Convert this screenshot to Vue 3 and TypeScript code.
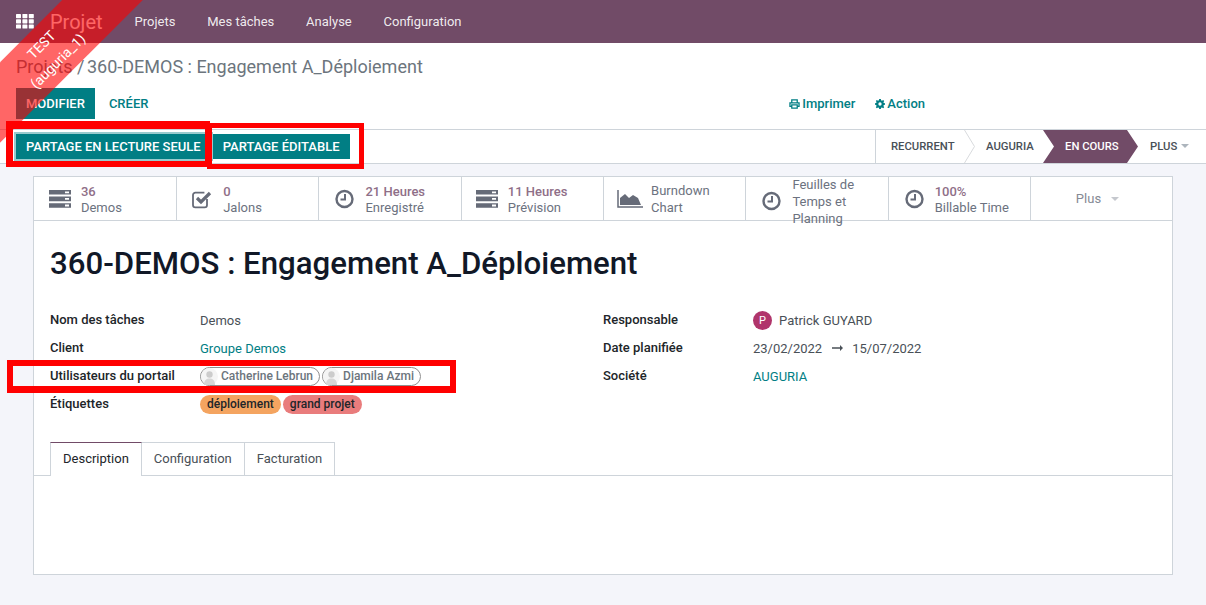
<script setup lang="ts">
const menus = ['Projets', 'Mes tâches', 'Analyse', 'Configuration']

interface Stat {
  icon: 'server' | 'check' | 'clock' | 'chart'
  value?: string
  label: string
}

const stats: Stat[] = [
  { icon: 'server', value: '36', label: 'Demos' },
  { icon: 'check', value: '0', label: 'Jalons' },
  { icon: 'clock', value: '21 Heures', label: 'Enregistré' },
  { icon: 'server', value: '11 Heures', label: 'Prévision' },
  { icon: 'chart', label: 'Burndown Chart' },
  { icon: 'clock', label: 'Feuilles de Temps et Planning' },
  { icon: 'clock', value: '100%', label: 'Billable Time' },
]

const portalUsers = ['Catherine Lebrun', 'Djamila Azmi']
const tabs = ['Description', 'Configuration', 'Facturation']
</script>

<template>
  <div class="page">
    <header class="navbar">
      <svg class="apps" width="18" height="15" viewBox="0 0 18 15" fill="#fff">
        <rect v-for="p in 9" :key="p" :x="((p - 1) % 3) * 6.4" :y="Math.floor((p - 1) / 3) * 5.2" width="5" height="4.2" rx="0.6" />
      </svg>
      <span class="brand">Projet</span>
      <nav class="menu">
        <a v-for="m in menus" :key="m">{{ m }}</a>
      </nav>
    </header>

    <section class="control">
      <div class="breadcrumb"><span class="crumb-parent">Projets / </span>360-DEMOS : Engagement A_Déploiement</div>
      <div class="actions">
        <div class="left-actions">
          <button class="btn primary" type="button">MODIFIER</button>
          <button class="btn link" type="button">CRÉER</button>
        </div>
        <div class="right-actions">
          <a>
            <svg width="11" height="10" viewBox="0 0 12 11" fill="none" stroke="#017e84" stroke-width="1.4">
              <path d="M3 4V1h6v3M3 8H1V4.2h10V8H9M3 6.5h6V10H3z" />
            </svg>
            Imprimer
          </a>
          <a>
            <svg width="10" height="10" viewBox="0 0 12 12">
              <path fill="#017e84" fill-rule="evenodd" d="M5 0h2l.3 1.6 1.1.5L9.8 1.2l1.2 1.2-.9 1.4.5 1.1L12 5v2l-1.4.3-.5 1.1.9 1.4-1.2 1.2-1.4-.9-1.1.5L7 12H5l-.3-1.400-1.100-.5-1.400.9L1 9.800l.9-1.400-.5-1.100L0 7V5l1.400-.3.5-1.100L1 2.400l1.200-1.200 1.400.9 1.100-.5zM6 4a2 2 0 1 0 0 4 2 2 0 0 0 0-4z" />
            </svg>
            Action
          </a>
        </div>
      </div>
      <div class="status-row">
        <div class="share-buttons">
          <button class="btn primary share focused" type="button">PARTAGE EN LECTURE SEULE</button>
          <button class="btn primary share" type="button">PARTAGE ÉDITABLE</button>
        </div>
        <div class="statusbar">
          <span class="step first">RECURRENT
            <svg class="chevron" width="12" height="33" viewBox="0 0 12 33" fill="none" stroke="#d8dadd"><path d="M0.5 0l10 16.5L0.5 33" /></svg>
          </span>
          <span class="step second">AUGURIA</span>
          <span class="step current">EN COURS</span>
          <span class="step more">PLUS <i class="caret"></i></span>
        </div>
      </div>
    </section>

    <main class="content">
      <div class="sheet">
        <div class="stats">
          <div v-for="s in stats" :key="s.label" class="stat">
            <svg v-if="s.icon === 'server'" class="stat-icon" width="24" height="20" viewBox="0 0 24 20" fill="#666b78">
              <path fill-rule="evenodd" d="M1 1h22v4.6H1zM17 2.400v1.800h4V2.400zM1 7.600h22v4.600H1zM17 9v1.800h4V9zM1 14.200h22v4.600H1zM17 15.600v1.800h4v-1.800z" />
            </svg>
            <svg v-else-if="s.icon === 'check'" class="stat-icon" width="24" height="20" viewBox="0 0 24 20">
              <path fill="none" stroke="#666b78" stroke-width="1.800" d="M17 10v6a2.400 2.400 0 0 1-2.400 2.400H5.400A2.400 2.400 0 0 1 3 16V6a2.400 2.400 0 0 1 2.400-2.400h9" />
              <path fill="none" stroke="#666b78" stroke-width="3.200" d="M7 9l4 4 9-9" />
            </svg>
            <svg v-else-if="s.icon === 'clock'" class="stat-icon" width="24" height="20" viewBox="0 0 24 20" fill="none" stroke="#666b78">
              <circle cx="12.500" cy="10" r="8" stroke-width="2.400" />
              <path stroke-width="2" d="M13 5v5.500H8.500" />
            </svg>
            <svg v-else class="stat-icon chart" width="26" height="20" viewBox="0 0 26 20">
              <path fill="none" stroke="#666b78" stroke-width="1.500" d="M1 1v17h25" />
              <path fill="#666b78" d="M3 16V9l5-4 4 4 4-3 5 3 3 7z" />
            </svg>
            <div class="stat-text" :class="{ plain: !s.value }">
              <span v-if="s.value" class="stat-value">{{ s.value }}</span>
              <span class="stat-label">{{ s.label }}</span>
            </div>
          </div>
          <div class="stat plus">Plus <i class="caret"></i></div>
        </div>

        <div class="body">
          <h1>360-DEMOS : Engagement A_Déploiement</h1>
          <div class="columns">
            <div class="fields">
              <label>Nom des tâches</label>
              <span class="value">Demos</span>
              <label>Client</label>
              <a class="value link-value">Groupe Demos</a>
              <label>Utilisateurs du portail</label>
              <span class="value chips">
                <span v-for="u in portalUsers" :key="u" class="chip">
                  <svg width="17" height="17" viewBox="0 0 17 17">
                    <circle cx="8.500" cy="8.500" r="8.500" fill="#f5f5f5" />
                    <circle cx="8.500" cy="6.500" r="3.200" fill="#cccccc" />
                    <path fill="#d6d6d6" d="M3 17c0-5 2.500-6.500 5.500-6.500S14 12 14 17z" />
                  </svg>
                  {{ u }}
                </span>
              </span>
              <label>Étiquettes</label>
              <span class="value chips">
                <span class="tag orange">déploiement</span>
                <span class="tag red">grand projet</span>
              </span>
            </div>
            <div class="fields">
              <label>Responsable</label>
              <span class="value person"><b class="avatar">P</b>Patrick GUYARD</span>
              <label>Date planifiée</label>
              <span class="value dates">
                23/02/2022
                <svg width="11" height="6" viewBox="0 0 11 6"><path fill="#495057" d="M0 2.200h8V0l3 3-3 3V3.800H0z" /></svg>
                15/07/2022
              </span>
              <label>Société</label>
              <a class="value link-value">AUGURIA</a>
            </div>
          </div>

          <div class="tabs">
            <a v-for="(t, i) in tabs" :key="t" class="tab" :class="{ active: i === 0 }">{{ t }}</a>
          </div>
        </div>
      </div>
    </main>

    <div class="ribbon"><span>TEST<br />(auguria_1)</span></div>

    <div class="mark mark-a"></div>
    <div class="mark mark-b"></div>
    <div class="mark mark-c"></div>
  </div>
</template>

<style>
html,
body {
  margin: 0;
  background: #f4f5fa;
}
</style>

<style scoped>
.page {
  position: relative;
  height: 605px;
  overflow: hidden;
  background: #f4f5fa;
  font-family: Roboto, "Noto Sans", sans-serif;
  font-size: 13px;
  color: #495057;
}

.navbar {
  display: flex;
  align-items: center;
  height: 43px;
  padding-left: 16px;
  background: #714b67;
  color: #fff;
}

.apps {
  flex: none;
}

.brand {
  margin-left: 16px;
  font-size: 20px;
  line-height: 1;
}

.menu {
  display: flex;
  gap: 31.8px;
  margin-left: 32px;
}

.menu a {
  color: rgba(255, 255, 255, 0.9);
  font-size: 13px;
}

.control {
  background: #fff;
  border-bottom: 1px solid #ced4da;
}

.breadcrumb {
  padding: 13px 0 0 16px;
  height: 32px;
  font-size: 18px;
  line-height: 21px;
  color: #6c757d;
}

.crumb-parent {
  margin-right: -2px;
}

.actions {
  display: flex;
  justify-content: space-between;
  height: 41px;
  padding-left: 16px;
}

.left-actions {
  display: flex;
  height: 31px;
}

.right-actions {
  display: flex;
  align-items: center;
  gap: 20px;
  height: 31px;
  margin-right: 281px;
}

.right-actions a {
  display: flex;
  align-items: center;
  gap: 2px;
  color: #017e84;
  font-weight: 500;
  font-size: 13px;
}

.btn {
  border: 0;
  font-family: inherit;
  font-size: 13px;
  font-weight: 500;
  cursor: pointer;
}

.btn.primary {
  background: #017e84;
  color: #fff;
  padding: 0 10px;
}

.btn.link {
  background: none;
  color: #017e84;
  padding: 0 14px;
}

.status-row {
  display: flex;
  justify-content: space-between;
  height: 33px;
  border-top: 1px solid #ced4da;
}

.share-buttons {
  display: flex;
  align-items: center;
  gap: 2px;
  padding-left: 16px;
}

.share {
  height: 25px;
  white-space: nowrap;
}

.share.focused {
  box-shadow: 0 0 0 2px rgba(1, 126, 132, 0.4);
}

.statusbar {
  display: flex;
  align-items: stretch;
  width: 330px;
  border-left: 1px solid #ced4da;
  font-size: 11.3px;
  font-weight: 500;
  color: #495057;
}

.step {
  position: relative;
  display: flex;
  align-items: center;
  padding-bottom: 1px;
  white-space: nowrap;
}

.step.first {
  width: 94px;
  padding-left: 15px;
  box-sizing: border-box;
}

.chevron {
  position: absolute;
  left: 88px;
  top: 0;
}

.step.second {
  width: 73px;
  padding-left: 16px;
  box-sizing: border-box;
}

.step.current {
  width: 95px;
  padding-left: 22px;
  box-sizing: border-box;
  color: #fff;
  background: #714b67;
  clip-path: polygon(0 0, 84px 0, 95px 50%, 84px 100%, 0 100%, 11px 50%);
}

.step.more {
  margin-left: 12px;
}

.caret {
  display: inline-block;
  width: 0;
  height: 0;
  margin-left: 4px;
  border-top: 4px solid #adb5bd;
  border-left: 4px solid transparent;
  border-right: 4px solid transparent;
}

.content {
  padding: 12px 33px 0;
}

.sheet {
  height: 397px;
  box-sizing: content-box;
  background: #fff;
  border: 1px solid #ced4da;
}

.stats {
  display: grid;
  grid-template-columns: repeat(7, 142.3px) 1fr;
  grid-template-rows: 43px;
  height: 43px;
  padding-left: 0.9px;
  border-bottom: 1px solid #ced4da;
}

.stat {
  display: flex;
  align-items: center;
  gap: 8px;
  padding-left: 13px;
  border-right: 1px solid #ced4da;
  box-sizing: border-box;
  color: #666b78;
  min-width: 0;
}

/* three lines do not fit the bar, they overflow downwards */
.stat:nth-child(6) {
  padding-top: 5px;
}

.stat-icon {
  flex: none;
}

.stat-icon.chart {
  margin-right: -1px;
}

.stat-text {
  display: flex;
  flex-direction: column;
  padding-top: 2px;
  padding-left: 1px;
  line-height: 16px;
}

.stat-text.plain {
  max-width: 75px;
  padding-top: 0;
  line-height: 17px;
}

.stat-value {
  color: #8f6f88;
  font-weight: 500;
}

.stat-label {
  color: #6c7280;
}

.stat.plus {
  justify-content: center;
  gap: 6px;
  padding: 0 8px 0 0;
  border-right: 0;
  color: #858a94;
}

.stat.plus .caret {
  margin-left: 4px;
  border-top-color: #c5c8ce;
}

.body {
  padding: 0 16px;
}

h1 {
  margin: 0;
  padding: 25px 0 0;
  height: 57px;
  font-size: 31.2px;
  line-height: 36px;
  font-weight: 500;
  color: #111827;
  box-sizing: content-box;
}

.columns {
  display: grid;
  grid-template-columns: 553px 1fr;
  margin-top: 2px;
}

.fields {
  display: grid;
  grid-template-columns: 150px 1fr;
  grid-auto-rows: 28px;
  align-items: center;
}

.fields label {
  font-weight: 500;
  color: #212529;
  white-space: nowrap;
}

.value {
  color: #495057;
  white-space: nowrap;
  padding-top: 2px;
}

.link-value {
  color: #017e84;
}

.chips {
  display: flex;
  gap: 2px;
}

.chip {
  display: inline-flex;
  align-items: center;
  gap: 3px;
  height: 17px;
  padding-right: 6px;
  border: 1px solid #8f8f8f;
  border-radius: 10px;
  color: #6c757d;
  font-size: 12px;
  font-weight: 500;
}

.tag {
  display: inline-flex;
  align-items: center;
  height: 19px;
  padding: 0 7px;
  border-radius: 10px;
  font-size: 12px;
  font-weight: 500;
  color: #212529;
}

.tag.orange {
  background: #f4a460;
}

.tag.red {
  background: #e97c7c;
}

.person {
  display: flex;
  align-items: center;
  gap: 7px;
}

.avatar {
  display: flex;
  align-items: center;
  justify-content: center;
  width: 19px;
  height: 19px;
  border-radius: 50%;
  background: #b0356b;
  color: #fff;
  font-size: 11px;
  font-weight: 400;
}

.dates {
  display: flex;
  align-items: center;
  gap: 9.5px;
}

.tabs {
  display: flex;
  height: 33px;
  margin: 25px -16px 0;
  padding-left: 16px;
  border-bottom: 1px solid #ced4da;
}

.tab {
  display: flex;
  align-items: center;
  padding: 0 12px 2px;
  border: 1px solid #ced4da;
  border-left: 0;
  border-bottom: 0;
  color: #495057;
}

.tab.active {
  position: relative;
  height: 34px;
  box-sizing: border-box;
  background: #fff;
  color: #212529;
  border-left: 1px solid #ced4da;
  border-top-color: #714b67;
}

.ribbon {
  position: absolute;
  left: -99px;
  top: 23px;
  width: 300px;
  height: 57px;
  padding-right: 4px;
  box-sizing: border-box;
  display: flex;
  align-items: center;
  justify-content: center;
  background: rgba(255, 0, 0, 0.6);
  transform: rotate(-45deg);
  color: #fff;
  font-size: 14px;
  line-height: 23px;
  text-align: center;
  pointer-events: none;
}

.mark {
  position: absolute;
  border: 5px solid #ff0000;
  box-sizing: border-box;
  pointer-events: none;
}

.mark-a {
  left: 6px;
  top: 121px;
  width: 204px;
  height: 46px;
  border-width: 8px 5px 6px 7px;
}

.mark-b {
  left: 207px;
  top: 123px;
  width: 157px;
  height: 46px;
}

.mark-c {
  left: 7px;
  top: 360px;
  width: 449px;
  height: 33px;
  border-width: 6px 6px 7px;
}
</style>
